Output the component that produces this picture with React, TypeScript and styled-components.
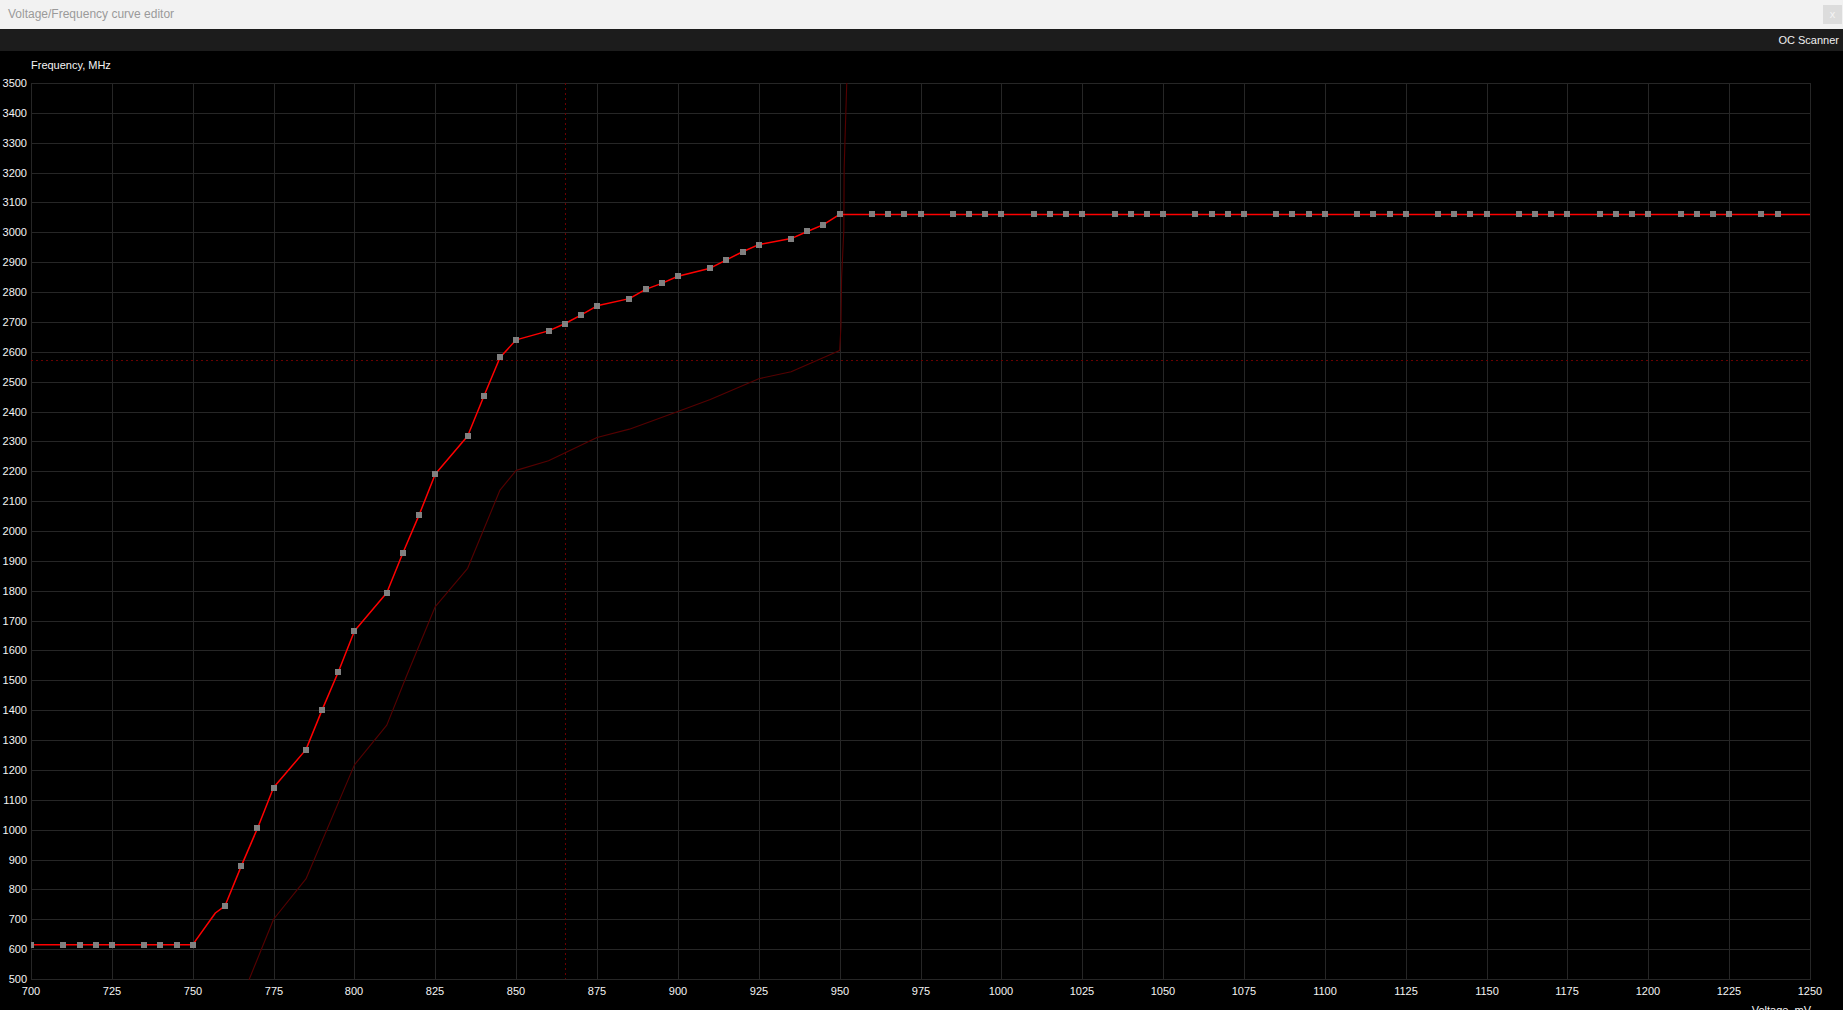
import React from "react";
import styled, { createGlobalStyle } from "styled-components";

const GlobalStyle = createGlobalStyle`
  html, body {
    margin: 0;
    padding: 0;
    background: #000;
    overflow: hidden;
  }
  * { box-sizing: border-box; }
`;

const Window = styled.div`
  display: flex;
  flex-direction: column;
  width: 100vw;
  height: 100vh;
  background: #000;
  font-family: "Liberation Sans", Arial, sans-serif;
`;

const TitleBar = styled.div`
  display: flex;
  align-items: center;
  justify-content: space-between;
  height: 29px;
  padding: 0 1px 0 8px;
  background: #f2f2f2;
`;

const Title = styled.span`
  font-size: 12px;
  color: #9a9a9a;
  padding-bottom: 1px;
`;

const CloseButton = styled.button`
  width: 19px;
  height: 19px;
  padding: 0;
  border: none;
  background: #dcdcdc;
  color: #f4f4f4;
  font-family: "Liberation Sans", Arial, sans-serif;
  font-size: 11px;
  line-height: 19px;
  text-align: center;
  cursor: pointer;
`;

const Toolbar = styled.div`
  display: flex;
  align-items: center;
  justify-content: flex-end;
  height: 22px;
  padding-right: 4px;
  background: #1c1c1c;
`;

const ToolButton = styled.span`
  font-size: 11px;
  color: #f0f0f0;
  cursor: pointer;
`;

const ChartArea = styled.div`
  flex: 1;
  overflow: hidden;
  background: #000;
`;

const Svg = styled.svg`
  display: block;
`;

const Label = styled.text<{ $anchor?: string }>`
  font-family: "Liberation Sans", Arial, sans-serif;
  font-size: 11px;
  fill: #f4f4f4;
  text-anchor: ${(p) => p.$anchor || "start"};
`;

const GridLine = styled.line`
  stroke: #262626;
  stroke-width: 1;
  shape-rendering: crispEdges;
`;

const Cursor = styled.line`
  stroke: #6a0000;
  stroke-width: 1;
  stroke-dasharray: 2 3;
  shape-rendering: crispEdges;
`;

const Curve = styled.polyline<{ $color: string; $width: number }>`
  fill: none;
  stroke: ${(p) => p.$color};
  stroke-width: ${(p) => p.$width};
  stroke-linejoin: round;
`;

const Marker = styled.rect`
  fill: #808080;
  shape-rendering: crispEdges;
`;

// plot geometry (svg coordinates)
const W = 1843;
const H = 959;
const X0 = 31;
const X1 = 1810;
const Y0 = 32;
const Y1 = 928;
const DX = (X1 - X0) / 550;
const DY = (Y1 - Y0) / 3000;

const vx = (v: number) => X0 + (v - 700) * DX;
const fy = (f: number) => Y0 + (3500 - f) * DY;

// current curve: [mV, MHz, marker?]
const curve: [number, number, boolean][] = [
  [700, 615, true], [710, 615, true], [715, 615, true], [720, 615, true],
  [725, 615, true], [735, 615, true], [740, 615, true], [745, 615, true],
  [750, 615, true], [757, 721, false], [760, 745, true], [765, 878, true],
  [770, 1004, true], [775, 1141, true], [785, 1268, true], [790, 1401, true],
  [795, 1528, true], [800, 1665, true], [810, 1793, true], [815, 1927, true],
  [820, 2054, true], [825, 2191, true], [835, 2318, true], [840, 2451, true],
  [845, 2581, true], [850, 2640, true], [860, 2670, true], [865, 2694, true],
  [870, 2723, true], [875, 2754, true], [885, 2778, true], [890, 2809, true],
  [895, 2829, true], [900, 2853, true], [910, 2880, true], [915, 2908, true],
  [920, 2935, true], [925, 2959, true], [935, 2979, true], [940, 3003, true],
  [945, 3026, true], [950, 3060, true],
];
for (let v = 955; v <= 1240; v += 5) {
  curve.push([v, 3060, v % 25 !== 5]);
}
curve.push([1250, 3060, false]);

// default (stock) curve, drawn dim
const stock: [number, number][] = [
  [765, 420], [767.5, 500], [775, 700], [785, 835], [800, 1217], [810, 1350],
  [816, 1512], [825, 1747], [835, 1875], [845, 2137], [850, 2203], [860, 2235],
  [875, 2313], [885, 2341], [900, 2400], [910, 2440], [925, 2510], [935, 2533],
  [950, 2604], [950.4, 2685], [950.6, 2847], [951.3, 3008], [951.4, 3215],
  [951.7, 3326], [952.2, 3500], [952.3, 3560],
];

const voltTicks = Array.from({ length: 23 }, (_, i) => 700 + i * 25);
const freqTicks = Array.from({ length: 31 }, (_, i) => 500 + i * 100);

const toPoints = (pts: [number, number, ...unknown[]][]) =>
  pts.map(([v, f]) => `${vx(v).toFixed(2)},${fy(f).toFixed(2)}`).join(" ");

const CurveChart: React.FC = () => {
  const cursorX = Math.round(vx(865.2)) + 0.5;
  const cursorY = Math.round(fy(2572)) + 0.5;

  return (
    <Svg width={W} height={H} viewBox={`0 0 ${W} ${H}`}>
      <defs>
        <clipPath id="plot">
          <rect x={X0} y={Y0} width={X1 - X0 + 1} height={Y1 - Y0 + 1} />
        </clipPath>
      </defs>

      <Label x={X0} y={18}>Frequency, MHz</Label>

      {voltTicks.map((v) => {
        const x = Math.round(vx(v)) + 0.5;
        return <GridLine key={`v${v}`} x1={x} y1={Y0} x2={x} y2={Y1 + 1} />;
      })}
      {freqTicks.map((f) => {
        const y = Math.round(fy(f)) + 0.5;
        return <GridLine key={`f${f}`} x1={X0} y1={y} x2={X1 + 1} y2={y} />;
      })}

      {freqTicks.map((f) => (
        <Label key={`fl${f}`} x={27} y={Math.round(fy(f)) + 4} $anchor="end">
          {f}
        </Label>
      ))}
      {voltTicks.map((v) => (
        <Label key={`vl${v}`} x={Math.round(vx(v))} y={944} $anchor="middle">
          {v}
        </Label>
      ))}
      <Label x={X1 + 1} y={963} $anchor="end">Voltage, mV</Label>

      <g clipPath="url(#plot)">
        <Cursor x1={X0} y1={cursorY} x2={X1} y2={cursorY} />
        <Cursor x1={cursorX} y1={Y0} x2={cursorX} y2={Y1} />
        <Curve points={toPoints(stock)} $color="#560000" $width={1.1} />
        <Curve points={toPoints(curve)} $color="#ff0000" $width={1.5} />
        {curve
          .filter((p) => p[2])
          .map(([v, f]) => (
            <Marker
              key={`m${v}`}
              x={Math.round(vx(v)) - 3}
              y={Math.round(fy(f)) - 3}
              width={6}
              height={6}
            />
          ))}
      </g>
    </Svg>
  );
};

const App: React.FC = () => {
  return (
    <Window>
      <GlobalStyle />
      <TitleBar>
        <Title>Voltage/Frequency curve editor</Title>
        <CloseButton>x</CloseButton>
      </TitleBar>
      <Toolbar>
        <ToolButton>OC Scanner</ToolButton>
      </Toolbar>
      <ChartArea>
        <CurveChart />
      </ChartArea>
    </Window>
  );
};

export default App;
